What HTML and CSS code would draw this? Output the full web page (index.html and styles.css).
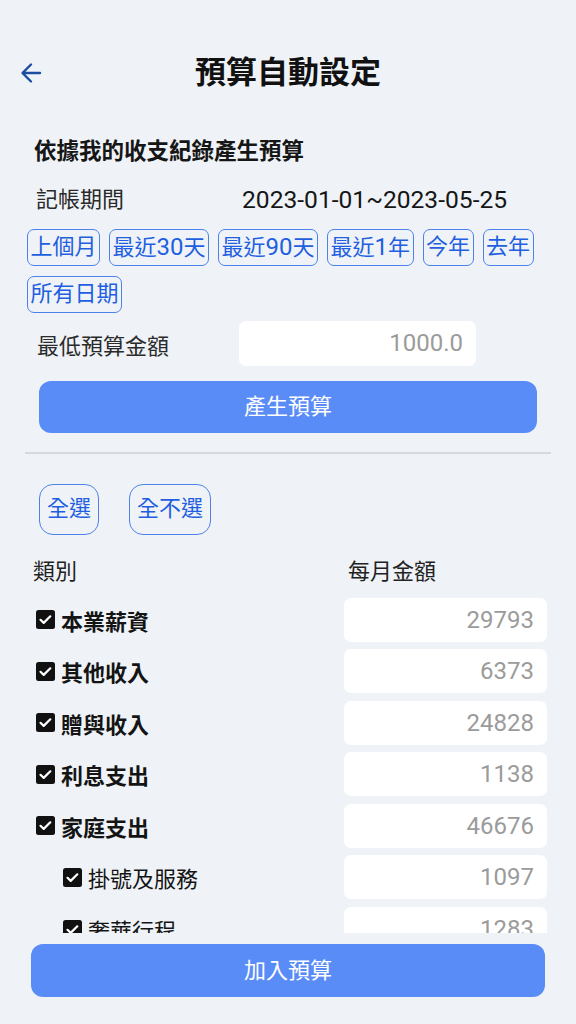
FILE: index.html
```html
<!DOCTYPE html>
<html lang="zh-Hant">
<head>
<meta charset="utf-8" />
<title>預算自動設定</title>
<link rel="stylesheet" href="styles.css">
</head>
<body>
	<div class="topbar">
		<svg class="back" width="22" height="22" viewBox="0 0 22 22"><path d="M20 11H3M11 2.5L2.5 11 11 19.5" fill="none" stroke="#1d4d9f" stroke-width="2.4" stroke-linecap="round" stroke-linejoin="round"/></svg>
		<h1>預算自動設定</h1>
		<span></span>
	</div>

	<div class="source">
		<h2>依據我的收支紀錄產生預算</h2>
		<div class="period">
			<span class="label">記帳期間</span>
			<span class="date">2023-01-01~2023-05-25</span>
		</div>
		<div class="chips">
			<span class="chip">上個月</span>
			<span class="chip">最近<span class="num">30</span>天</span>
			<span class="chip">最近<span class="num">90</span>天</span>
			<span class="chip">最近<span class="num">1</span>年</span>
			<span class="chip">今年</span>
			<span class="chip">去年</span>
			<span class="chip">所有日期</span>
		</div>
		<div class="minrow">
			<span class="label">最低預算金額</span>
			<span class="field">1000.0</span>
		</div>
		<div class="btn gen">產生預算</div>
	</div>

	<div class="divider"></div>

	<div class="select">
		<span class="sel">全選</span>
		<span class="sel">全不選</span>
	</div>

	<div class="colhead">
		<span>類別</span>
		<span>每月金額</span>
	</div>

	<div class="list">
		<div class="row top"><span class="cat"><i class="cb"><svg width="19" height="19" viewBox="0 0 19 19"><path d="M4.5 9.8l3.2 3.1 6.6-6.6" fill="none" stroke="#fff" stroke-width="2.2" stroke-linecap="round" stroke-linejoin="round"/></svg></i>本業薪資</span><span class="field">29793</span></div>
		<div class="row top"><span class="cat"><i class="cb"><svg width="19" height="19" viewBox="0 0 19 19"><path d="M4.5 9.8l3.2 3.1 6.6-6.6" fill="none" stroke="#fff" stroke-width="2.2" stroke-linecap="round" stroke-linejoin="round"/></svg></i>其他收入</span><span class="field">6373</span></div>
		<div class="row top"><span class="cat"><i class="cb"><svg width="19" height="19" viewBox="0 0 19 19"><path d="M4.5 9.8l3.2 3.1 6.6-6.6" fill="none" stroke="#fff" stroke-width="2.2" stroke-linecap="round" stroke-linejoin="round"/></svg></i>贈與收入</span><span class="field">24828</span></div>
		<div class="row top"><span class="cat"><i class="cb"><svg width="19" height="19" viewBox="0 0 19 19"><path d="M4.5 9.8l3.2 3.1 6.6-6.6" fill="none" stroke="#fff" stroke-width="2.2" stroke-linecap="round" stroke-linejoin="round"/></svg></i>利息支出</span><span class="field">1138</span></div>
		<div class="row top"><span class="cat"><i class="cb"><svg width="19" height="19" viewBox="0 0 19 19"><path d="M4.5 9.8l3.2 3.1 6.6-6.6" fill="none" stroke="#fff" stroke-width="2.2" stroke-linecap="round" stroke-linejoin="round"/></svg></i>家庭支出</span><span class="field">46676</span></div>
		<div class="row sub"><span class="cat"><i class="cb"><svg width="19" height="19" viewBox="0 0 19 19"><path d="M4.5 9.8l3.2 3.1 6.6-6.6" fill="none" stroke="#fff" stroke-width="2.2" stroke-linecap="round" stroke-linejoin="round"/></svg></i>掛號及服務</span><span class="field">1097</span></div>
		<div class="row sub"><span class="cat"><i class="cb"><svg width="19" height="19" viewBox="0 0 19 19"><path d="M4.5 9.8l3.2 3.1 6.6-6.6" fill="none" stroke="#fff" stroke-width="2.2" stroke-linecap="round" stroke-linejoin="round"/></svg></i>奢華行程</span><span class="field">1283</span></div>
	</div>

	<div class="btn add">加入預算</div>
</body>
</html>
```

FILE: styles.css
```css
*{margin:0; padding:0; box-sizing:border-box;}
body{background:#eff3f7; font-family:Roboto, "Noto Sans CJK TC", sans-serif; color:#1c1c1c; font-size:22px; width:576px; height:1024px; overflow:hidden;}

.topbar{display:grid; grid-template-columns:64px 1fr 64px; align-items:center; padding-top:51px; height:95px;}
.back{margin-left:20px;}
h1{text-align:center; font-size:31px; font-weight:700; line-height:44px; color:#111;}

.source{padding:0 25px;}
h2{font-size:22.5px; font-weight:700; line-height:32px; margin-top:40px; padding-left:9px; color:#161616;}
.period{display:grid; grid-template-columns:217px 1fr; align-items:center; margin-top:16px; line-height:34px;}
.label{padding-left:11px; color:#2a2a2a;}
.date{font-size:24.6px; color:#161616;}

.chips{display:flex; flex-wrap:wrap; gap:10px 9px; margin-top:12px; padding-left:2px;}
.chip{border:1.5px solid #4d82ea; border-radius:7px; color:#1f5fe0; line-height:32px; height:37px; padding:1px 2.5px;}
.num{font-size:24px;}

.minrow{display:grid; grid-template-columns:214px 237px; align-items:center; margin-top:8px;}
.minrow .label{padding-left:12px;}
.field{background:#fff; border-radius:7px; text-align:right; color:#9b9b9b; font-size:24px; height:45px; line-height:45px; padding-right:13px;}

.btn{background:#5a8cf7; color:#fff; text-align:center; border-radius:12px;}
.gen{margin:15px 14px 0; height:52px; line-height:52px;}

.divider{margin:19px 25px 0; height:1.5px; background:#d5d8dd;}

.select{display:flex; gap:30px; padding-left:39px; margin-top:30px;}
.sel{border:1.5px solid #4d82ea; border-radius:14px; color:#1f5fe0; height:51px; line-height:48px; padding:0 7px;}

.colhead{display:grid; grid-template-columns:315px 1fr; margin-top:22px; padding-left:33px; line-height:30px; color:#222;}

.list{margin-top:11px; height:335px; overflow:hidden; display:flex; flex-direction:column; gap:7.6px; padding:0 29px 0 36px;}
.row{display:grid; grid-template-columns:1fr 203px; align-items:center; flex:none;}
.row .field{height:44px; line-height:44px;}
.cat{display:flex; align-items:center; gap:6px; color:#141414;}
.top .cat{font-weight:700;}
.sub .cat{padding-left:27px; font-weight:400;}
.cb{display:block; width:19px; height:19px; background:#111; border-radius:2.5px;}
.cb svg{display:block;}

.add{margin:11px 31px 0; height:53px; line-height:53px;}
```
